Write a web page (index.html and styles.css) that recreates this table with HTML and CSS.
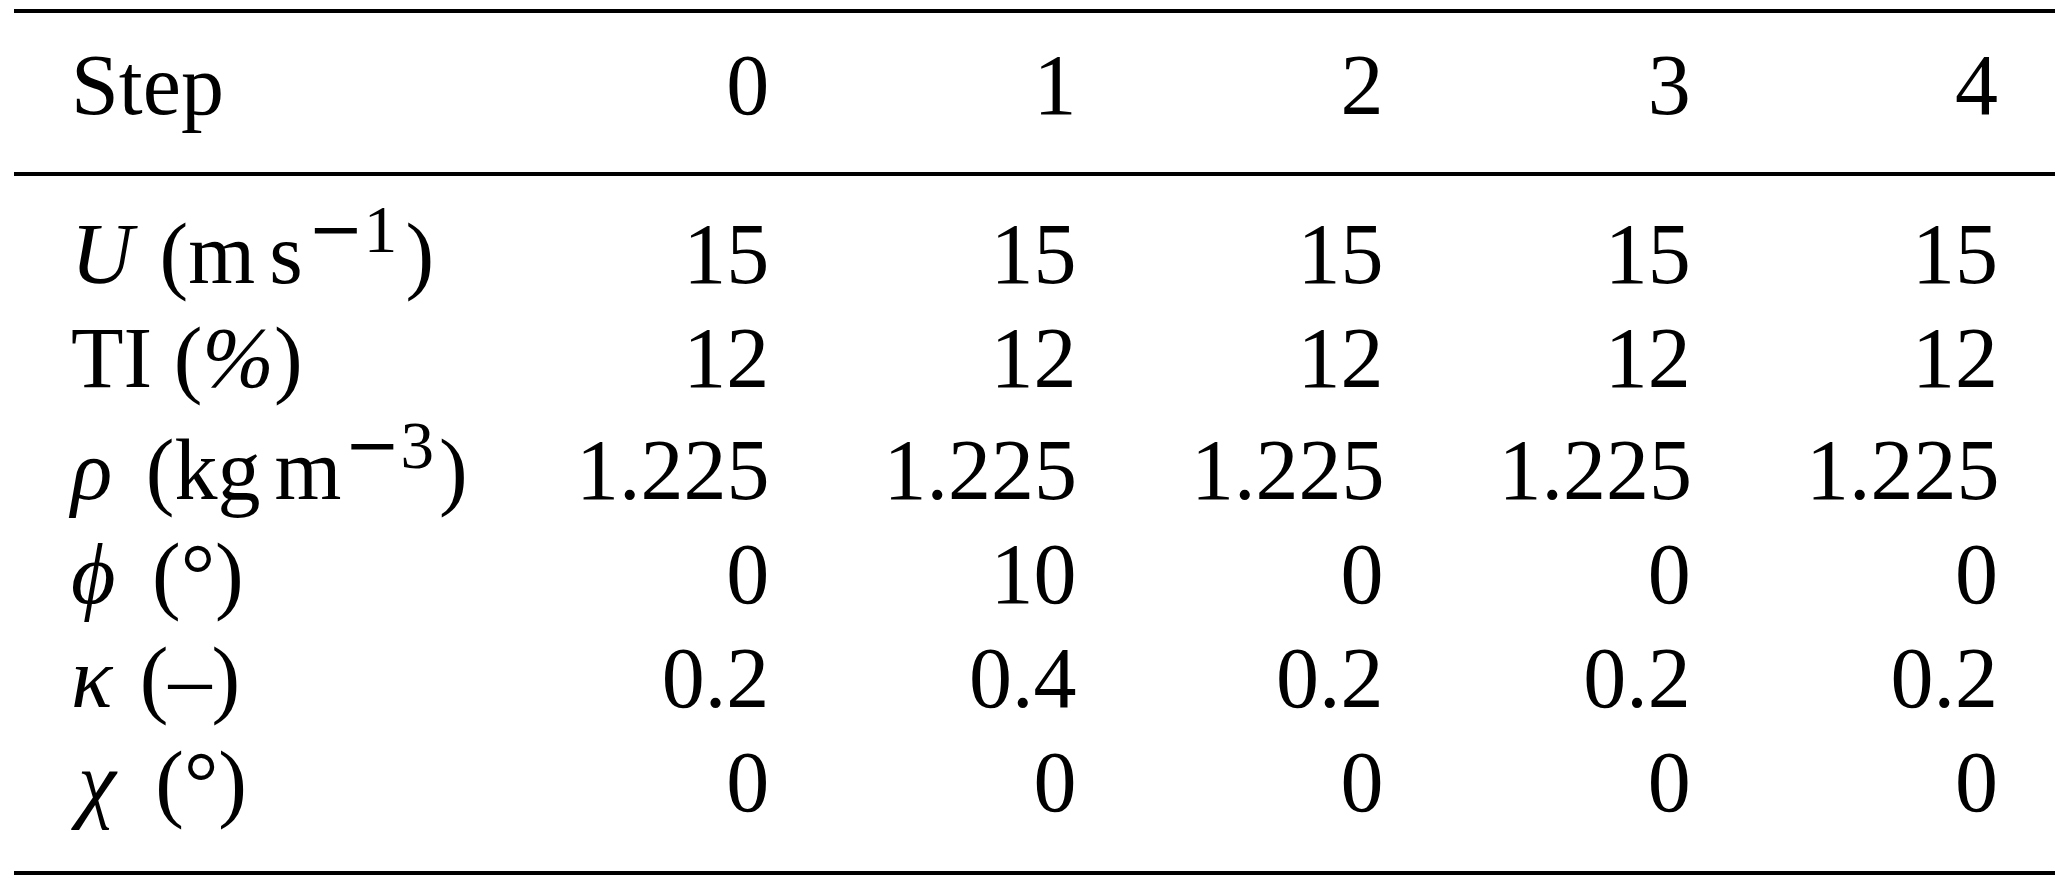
FILE: index.html
```html
<!DOCTYPE html>
<html>
<head>
<meta charset="utf-8">
<link rel="stylesheet" href="styles.css">
</head>
<body>
<div class="tbl">
  <div class="row head">
    <div class="cell label">Step</div>
    <div class="cell num">0</div>
    <div class="cell num">1</div>
    <div class="cell num">2</div>
    <div class="cell num">3</div>
    <div class="cell num">4</div>
  </div>
  <div class="rule"></div>
  <div class="body">
    <div class="row">
      <div class="cell label"><i class="sym sym-u">U</i> (m<span class="thin"></span>s<sup class="sup-wide"><span class="minus">−</span>1</sup>)</div>
      <div class="cell num">15</div>
      <div class="cell num">15</div>
      <div class="cell num">15</div>
      <div class="cell num">15</div>
      <div class="cell num">15</div>
    </div>
    <div class="row">
      <div class="cell label">TI (<i>%</i>)</div>
      <div class="cell num">12</div>
      <div class="cell num">12</div>
      <div class="cell num">12</div>
      <div class="cell num">12</div>
      <div class="cell num">12</div>
    </div>
    <div class="row tall">
      <div class="cell label"><i class="sym sym-rho">ρ</i> (kg<span class="thin"></span>m<sup><span class="minus">−</span>3</sup>)</div>
      <div class="cell num">1.225</div>
      <div class="cell num">1.225</div>
      <div class="cell num">1.225</div>
      <div class="cell num">1.225</div>
      <div class="cell num">1.225</div>
    </div>
    <div class="row">
      <div class="cell label"><i class="sym sym-phi">ϕ</i> (°)</div>
      <div class="cell num">0</div>
      <div class="cell num">10</div>
      <div class="cell num">0</div>
      <div class="cell num">0</div>
      <div class="cell num">0</div>
    </div>
    <div class="row">
      <div class="cell label"><i class="sym sym-kappa">κ</i> (–)</div>
      <div class="cell num">0.2</div>
      <div class="cell num">0.4</div>
      <div class="cell num">0.2</div>
      <div class="cell num">0.2</div>
      <div class="cell num">0.2</div>
    </div>
    <div class="row">
      <div class="cell label"><i class="sym sym-chi">χ</i> (°)</div>
      <div class="cell num">0</div>
      <div class="cell num">0</div>
      <div class="cell num">0</div>
      <div class="cell num">0</div>
      <div class="cell num">0</div>
    </div>
  </div>
</div>
</body>
</html>
```
FILE: styles.css
```css
html, body {
  margin: 0;
  padding: 0;
  background: #fff;
}

body {
  font-family: "Liberation Serif", "Times New Roman", serif;
  font-size: 86px;
  color: #000;
}

.tbl {
  width: 2041px;
  margin: 9px 0 0 14px;
  border-top: 4px solid #000;
  border-bottom: 4px solid #000;
}

.row {
  display: grid;
  grid-template-columns: 505px repeat(5, 1fr);
  height: 104px;
  line-height: 104px;
}

.head {
  margin-top: 20px;
  margin-bottom: 35px;
}

.rule {
  height: 4px;
  background: #000;
}

.body {
  padding-top: 26px;
  padding-bottom: 37px;
}

.row.tall {
  margin-top: 8px;
}

.cell {
  padding: 0 57px;
  white-space: nowrap;
}

.num {
  text-align: right;
}

.label i {
  font-style: italic;
}

.sym {
  display: inline-block;
}

.sym-u {
  margin-right: 5px;
}

.sym-rho {
  margin-right: 12px;
}

.sym-phi {
  margin-right: 15px;
}

.sym-kappa {
  margin-right: 6px;
}

.sym-chi {
  margin-left: 7px;
  margin-right: 18px;
}

.thin {
  display: inline-block;
  width: 14px;
}

sup {
  font-size: 0.78em;
  line-height: 0;
  vertical-align: 31px;
  margin-left: 3px;
  margin-right: 5px;
}

.sup-wide {
  margin-left: 5px;
  margin-right: 8px;
}

.minus {
  font-family: "DejaVu Serif", serif;
  font-weight: 300;
}
```
